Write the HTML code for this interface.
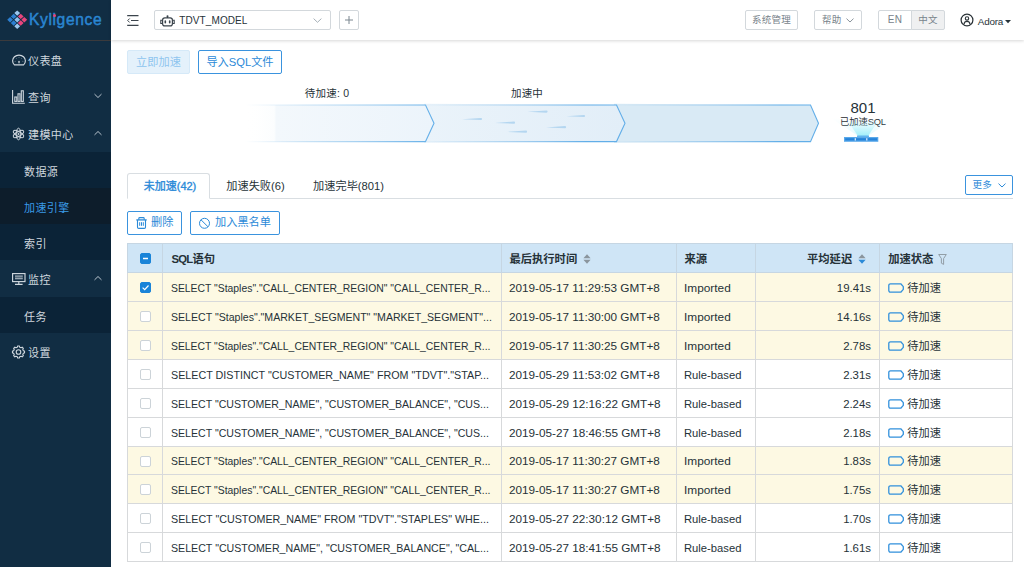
<!DOCTYPE html>
<html lang="zh-CN">
<head>
<meta charset="utf-8">
<title>Kyligence</title>
<style>
*{box-sizing:border-box;margin:0;padding:0}
html,body{width:1024px;height:567px;overflow:hidden;background:#fff}
body{font-family:"Liberation Sans","Noto Sans CJK SC",sans-serif;font-size:10px;color:#263238;position:relative}
.abs{position:absolute}
svg{display:block;overflow:visible}
/* sidebar */
#side{position:absolute;left:0;top:0;width:111px;height:567px;background:#112d43}
#logo{position:absolute;left:0;top:0;width:111px;height:41px;border-bottom:1px solid #3b3a3c}
#logo .txt{position:absolute;left:29px;top:10px;font-size:15.600px;font-weight:400;-webkit-text-stroke:.45px #2a86d2;line-height:20px;color:#2a86d2;letter-spacing:.62px}
#logo .reg{position:absolute;left:100px;top:14px;font-size:3px;color:#2b8bd8}
.mi{position:absolute;left:0;width:111px;color:#d0d8df;font-size:11px;letter-spacing:0.4px}
.mi .t{position:absolute;left:28px;top:50%;transform:translateY(-50%);white-space:nowrap;line-height:14px;margin-top:1.300px}
.mi svg.ic{position:absolute;left:12px;top:50%;transform:translateY(-50%)}
.mi svg.ch{position:absolute;left:94px;top:50%;transform:translateY(-50%);margin-top:-.5px}
.sub{background:#0b2337}
.sub .t{left:24px;margin-top:2.200px}
.sub.on{background:#0d1d2b;color:#3a9be8}
/* topbar */
#top{position:absolute;left:111px;top:0;width:913px;height:40px;background:#fff;box-shadow:0 1px 3px rgba(0,0,0,.16)}
.btn{position:absolute;border:1px solid #d3d8dc;border-radius:2px;background:#fff;color:#78838b;font-size:9.5px;white-space:nowrap;text-align:center}
.bl{border-color:#2b8ad8;color:#2b8ad8}
/* table */
#tbl{position:absolute;left:127px;top:243px;width:885px;border-collapse:collapse;table-layout:fixed;font-size:11.400px;color:#263238}
#tbl th,#tbl td{border:1px solid #d7d9db;height:29px;padding:1px 0 0 6.800px;text-align:left;white-space:nowrap;overflow:hidden;vertical-align:middle;line-height:14px}
#tbl th{padding-left:7.400px;background:#cfe5f6;font-weight:700;font-size:11.300px;color:#263238;border-color:#c6d6e3}
#tbl th .cb{top:-1px}
#tbl tr.y td{background:#fdf9e3}
#tbl tr.h28 td{height:28px}
#tbl td.q{padding-left:8.300px}
#tbl th.q{padding-left:8.400px}
#tbl td.r,#tbl th.r{text-align:right;padding:1px 8px 0 0}
#tbl td.c,#tbl th.c{text-align:center;padding:0}
#tbl td:last-child{padding-left:7.300px}
#tbl th:last-child{padding-left:8.200px}
.x{display:inline-block;transform-origin:0 50%;white-space:nowrap}
.xr{display:inline-block;transform-origin:100% 50%;white-space:nowrap}
.cb{display:inline-block;width:11px;height:11px;border:1px solid #ccd3d8;border-radius:2px;background:#fff;vertical-align:middle;position:relative;top:0;left:.2px}
.cb.on{background:#1a84d8;border-color:#1a84d8}
.cb svg{position:absolute;left:-1px;top:-1px}
.st{display:inline-block;vertical-align:middle;font-size:11.200px;transform:translateY(-.5px)}
svg.si{display:inline-block;vertical-align:middle;position:relative;top:-.5px;margin-left:3px}
svg.sti{display:inline-block;width:16px;height:10px;vertical-align:middle;margin-right:3.500px;margin-left:.5px;position:relative;top:0}
</style>
</head>
<body>
<div id="side">
  <div id="logo">
    <svg class="abs" style="left:7px;top:10px" width="21" height="19" viewBox="0 0 21 19">
      <g transform="translate(10.200 9.700) scale(1 .93) rotate(45)">
        <rect x="-7.050" y="-7.050" width="4.100" height="4.100" fill="#9cc7f0"/>
        <rect x="-2.050" y="-7.050" width="4.100" height="4.100" fill="#e8457c"/>
        <rect x="2.950" y="-7.050" width="4.100" height="4.100" fill="#e8457c"/>
        <rect x="-7.050" y="-2.050" width="4.100" height="4.100" fill="#2c7fd2"/>
        <rect x="-2.050" y="-2.050" width="4.100" height="4.100" fill="#8fbfee"/>
        <rect x="2.950" y="-2.050" width="4.100" height="4.100" fill="#e8457c"/>
        <rect x="-7.050" y="2.950" width="4.100" height="4.100" fill="#2c7fd2"/>
        <rect x="-2.050" y="2.950" width="4.100" height="4.100" fill="#2c7fd2"/>
        <rect x="2.950" y="2.950" width="4.100" height="4.100" fill="#9cc7f0"/>
      </g>
    </svg>
    <span class="txt">Kyligence</span>
    <span class="abs" style="left:52.750px;top:13.500px;width:3px;height:3px;border-radius:50%;background:#e8457c"></span>
  </div>

  <div class="mi" style="top:41px;height:37px">
    <svg class="ic" width="14" height="11" viewBox="0 0 14 11" fill="none" stroke="#d0d8df" stroke-width="1.150"><path d="M2.400 10.400h9.200c1.100-1 1.800-2.500 1.800-4.100A6.400 5.700 0 0 0 .6 6.300c0 1.600.7 3.100 1.800 4.100z"/><path d="M7 8.800 6.500 6.800h1z" fill="#d0d8df" stroke-width=".6"/><g fill="#d0d8df" stroke="none" opacity=".8"><circle cx="3.100" cy="6.700" r=".45"/><circle cx="4.300" cy="4.100" r=".45"/><circle cx="7" cy="3" r=".45"/><circle cx="9.700" cy="4.100" r=".45"/><circle cx="10.900" cy="6.700" r=".45"/></g></svg>
    <span class="t">仪表盘</span>
  </div>
  <div class="mi" style="top:78px;height:37px">
    <svg class="ic" style="margin-top:.5px" width="13" height="14" viewBox="0 0 13 14" fill="none" stroke="#d0d8df" stroke-width="1.100"><path d="M.6 0v13.300h12.200"/><rect x="2.800" y="7" width="2" height="4.400"/><rect x="6" y="3.800" width="2" height="7.600"/><rect x="9.300" y=".8" width="2" height="10.600"/></svg>
    <span class="t">查询</span>
    <svg class="ch" width="8" height="5" viewBox="0 0 8 5" fill="none" stroke="#b9c4ce" stroke-width="1"><path d="M.5.6 4 4 7.500.6"/></svg>
  </div>
  <div class="mi" style="top:115px;height:37px">
    <svg class="ic" width="13" height="13" viewBox="0 0 13 13" fill="none" stroke="#d0d8df" stroke-width="1"><ellipse cx="6.5" cy="6.5" rx="2.3" ry="5.8"/><ellipse cx="6.5" cy="6.5" rx="2.3" ry="5.8" transform="rotate(60 6.5 6.5)"/><ellipse cx="6.5" cy="6.5" rx="2.3" ry="5.8" transform="rotate(-60 6.5 6.5)"/><circle cx="6.5" cy="6.5" r="1" fill="#d0d8df" stroke="none"/></svg>
    <span class="t">建模中心</span>
    <svg class="ch" width="8" height="5" viewBox="0 0 8 5" fill="none" stroke="#b9c4ce" stroke-width="1"><path d="M.5 4.400 4 1 7.500 4.400"/></svg>
  </div>
  <div class="mi sub" style="top:152px;height:36px"><span class="t">数据源</span></div>
  <div class="mi sub on" style="top:188px;height:36px"><span class="t">加速引擎</span></div>
  <div class="mi sub" style="top:224px;height:36px"><span class="t">索引</span></div>
  <div class="mi" style="top:260px;height:37px">
    <svg class="ic" style="margin-top:.8px" width="14" height="12" viewBox="0 0 14 12" fill="none" stroke="#d0d8df" stroke-width="1.150"><rect x=".6" y=".6" width="12.400" height="8"/><path d="M3 3.100h7.800" stroke-width="1"/><path d="M3 5.400h7.800" stroke-width="1.800" opacity=".7"/><path d="M3 11.300h7.600M6.800 8.600v2.700"/></svg>
    <span class="t">监控</span>
    <svg class="ch" width="8" height="5" viewBox="0 0 8 5" fill="none" stroke="#b9c4ce" stroke-width="1"><path d="M.5 4.400 4 1 7.500 4.400"/></svg>
  </div>
  <div class="mi sub" style="top:297px;height:36px"><span class="t">任务</span></div>
  <div class="mi" style="top:333px;height:37px">
    <svg class="ic" width="13" height="13" viewBox="0 0 13 13" fill="none" stroke="#d0d8df" stroke-width="1.100" stroke-linejoin="round"><path d="M11.36 5.33 L12.54 5.64 L12.54 7.36 L11.36 7.67 L10.76 9.11 L11.38 10.16 L10.16 11.38 L9.11 10.76 L7.67 11.36 L7.36 12.54 L5.64 12.54 L5.33 11.36 L3.89 10.76 L2.84 11.38 L1.62 10.16 L2.24 9.11 L1.64 7.67 L0.46 7.36 L0.46 5.64 L1.64 5.33 L2.24 3.89 L1.62 2.84 L2.84 1.62 L3.89 2.24 L5.33 1.64 L5.64 0.46 L7.36 0.46 L7.67 1.64 L9.11 2.24 L10.16 1.62 L11.38 2.84 L10.76 3.89Z"/><circle cx="6.500" cy="6.500" r="2.300"/></svg>
    <span class="t">设置</span>
  </div>
</div>
<div id="top">
  <!-- hamburger -->
  <svg class="abs" style="left:16px;top:15px" width="12" height="11" viewBox="0 0 12 11" fill="none" stroke="#3b444c" stroke-width="1.200"><path d="M.2.700h11.300M4 5.500h7.500M.2 10.400h11.300"/><path d="M2.700 3.500.7 5.500 2.700 7.500" stroke-width="1"/></svg>
  <!-- project select -->
  <div class="abs" style="left:43px;top:10px;width:177px;height:20px;border:1px solid #d3d8dc;border-radius:2px;background:#fff">
    <svg class="abs" style="left:5px;top:3.500px" width="15" height="12" viewBox="0 0 15 12" fill="none" stroke="#3b444c" stroke-width="1.200"><rect x="2.600" y="2.900" width="9.800" height="8" rx="2.200"/><circle cx="7.500" cy="1.200" r="1" fill="#3b444c" stroke="none"/><path d="M7.500 1.500V3"/><path d="M2.600 5.300H.8v3.200h1.800M12.400 5.300h1.800v3.200h-1.800" stroke-width="1.100"/><rect x="4.500" y="5.200" width="1.600" height="3.400" rx=".8" fill="#3b444c" stroke="none"/><rect x="8.900" y="5.200" width="1.600" height="3.400" rx=".8" fill="#3b444c" stroke="none"/></svg>
    <span class="abs" style="left:24.300px;top:4px;font-size:10px;line-height:12.500px;color:#263238;letter-spacing:.1px">TDVT_MODEL</span>
    <svg class="abs" style="left:158px;top:7px" width="9" height="5" viewBox="0 0 9 5" fill="none" stroke="#a6b0b8" stroke-width="1"><path d="M.6.6 4.500 4.300 8.400.6"/></svg>
  </div>
  <div class="btn" style="left:228px;top:10px;width:20px;height:20px">
    <svg class="abs" style="left:5px;top:5px" width="8" height="8" viewBox="0 0 8 8" stroke="#7b868f" stroke-width="1"><path d="M4 0v8M0 4h8"/></svg>
  </div>
  <div class="btn" style="left:634px;top:10px;width:53px;height:20px;line-height:17px;letter-spacing:.3px">系统管理</div>
  <div class="btn" style="left:703px;top:10px;width:48px;height:20px;line-height:17px;text-align:left;padding-left:7px;letter-spacing:.3px">帮助
    <svg class="abs" style="left:31px;top:7px" width="8" height="5" viewBox="0 0 8 5" fill="none" stroke="#8a949c" stroke-width="1"><path d="M.5.6 4 4 7.5.6"/></svg>
  </div>
  <div class="btn" style="left:767px;top:10px;width:34px;height:20px;line-height:18px;border-radius:2px 0 0 2px;font-size:10px;letter-spacing:.2px">EN</div>
  <div class="btn" style="left:800px;top:10px;width:34px;height:20px;line-height:17px;border-radius:0 2px 2px 0;background:#eff0f1;letter-spacing:.3px">中文</div>
  <!-- user -->
  <svg class="abs" style="left:849.300px;top:13.300px" width="14" height="14" viewBox="0 0 14 14" fill="none" stroke="#2b3338" stroke-width="1.250"><circle cx="7" cy="7" r="5.900"/><circle cx="7" cy="5.400" r="1.700" stroke-width="1.100"/><path d="M3.900 11.300c.3-1.900 1.500-2.900 3.100-2.900s2.800 1 3.100 2.900" stroke-width="1.100"/></svg>
  <span class="abs" style="left:866.800px;top:14.500px;font-size:9.900px;line-height:13px;color:#263238;letter-spacing:-.2px">Adora</span>
  <svg class="abs" style="left:894.300px;top:20px" width="6" height="4" viewBox="0 0 6 4"><path d="M0 0h6L3 3.300z" fill="#263238"/></svg>
</div>

<!-- action buttons -->
<div class="abs" style="left:127px;top:50px;width:63px;height:24px;border:1px solid #d5e9f8;border-radius:2px;background:#e4f1fb;color:#8ec5ef;font-size:11.200px;line-height:23px;text-align:center;letter-spacing:0">立即加速</div>
<div class="abs" style="left:198px;top:50px;width:84px;height:24px;border:1px solid #3a93de;border-radius:2px;background:#fff;color:#2b8ad8;font-size:11.200px;line-height:23px;text-align:center;letter-spacing:0">导入SQL文件</div>

<!-- flow -->
<div class="abs" style="left:277px;top:86px;width:100px;text-align:center;font-size:10.5px;line-height:14px;color:#263238;letter-spacing:.2px">待加速: 0</div>
<div class="abs" style="left:477px;top:86px;width:100px;text-align:center;font-size:10.5px;line-height:14px;color:#263238;letter-spacing:.2px">加速中</div>
<svg class="abs" style="left:230px;top:100px" width="600" height="46" viewBox="230 100 600 46">
  <defs>
    <linearGradient id="g1" gradientUnits="userSpaceOnUse" x1="245" x2="434" y1="0" y2="0"><stop offset="0" stop-color="#ffffff" stop-opacity="0"/><stop offset=".155" stop-color="#fbfdfe"/><stop offset=".165" stop-color="#f3f8fc"/><stop offset="1" stop-color="#ecf4fb"/></linearGradient>
    <linearGradient id="g1s" gradientUnits="userSpaceOnUse" x1="245" x2="434" y1="0" y2="0"><stop offset="0" stop-color="#9ccbee" stop-opacity="0"/><stop offset=".35" stop-color="#9ccbee" stop-opacity=".55"/><stop offset="1" stop-color="#62aee8"/></linearGradient>
    <linearGradient id="g2" gradientUnits="userSpaceOnUse" x1="424" x2="625" y1="0" y2="0"><stop offset="0" stop-color="#eaf3fa"/><stop offset="1" stop-color="#e2eef8"/></linearGradient>
    <linearGradient id="g2s" gradientUnits="userSpaceOnUse" x1="430" x2="625" y1="0" y2="0"><stop offset="0" stop-color="#8cc3ec" stop-opacity=".1"/><stop offset=".5" stop-color="#7ebbea" stop-opacity=".7"/><stop offset=".8" stop-color="#62aee8"/></linearGradient>
    <linearGradient id="g3s" gradientUnits="userSpaceOnUse" x1="622" x2="819" y1="0" y2="0"><stop offset="0" stop-color="#8cc3ec" stop-opacity=".1"/><stop offset=".5" stop-color="#7ebbea" stop-opacity=".75"/><stop offset=".8" stop-color="#62aee8"/></linearGradient>
  </defs>
  <!-- seg 3 -->
  <path d="M614 103.800L810.500 105 818.500 123.300 810.500 141.600 614 142.800Z" fill="#d9eaf5"/>
  <path d="M617 105H810.500L818.500 123.300 810.500 141.600H617" fill="none" stroke="url(#g3s)" stroke-width="1.100"/>
  <!-- seg 2 -->
  <path d="M424 103.800L616.500 105 625 123.300 616.500 141.600 424 142.800Z" fill="url(#g2)"/>
  <path d="M426 105H616.500L625 123.300 616.500 141.600H426" fill="none" stroke="url(#g2s)" stroke-width="1.100"/>
  <!-- seg 1 -->
  <path d="M245 105H425.500L434 123.300 425.500 141.600H245Z" fill="url(#g1)"/>
  <path d="M245 105H425.500L434 123.300 425.500 141.600H245" fill="none" stroke="url(#g1s)" stroke-width="1.100"/>
  <!-- streaks -->
  <g fill="#b4d6f0">
    <path d="M462 119.200 481 117.900a1 1 0 0 1 0 2.200z"/>
    <path d="M495 122.900 514 121.600a1 1 0 0 1 0 2.200z"/>
    <path d="M527.500 111.800 546.500 110.500a1 1 0 0 1 0 2.200z"/>
    <path d="M507 131.900 526 130.600a1 1 0 0 1 0 2.200z"/>
    <path d="M546 127.400 565 126.100a1 1 0 0 1 0 2.200z"/>
    <path d="M566.500 116.200 584 114.900a1 1 0 0 1 0 2.200z"/>
  </g>
</svg>
<div class="abs" style="left:823px;top:99px;width:80px;text-align:center;font-size:15px;line-height:18px;color:#263238">801</div>
<div class="abs" style="left:823px;top:116px;width:80px;text-align:center;font-size:9.300px;line-height:12px;color:#1f2a30;letter-spacing:-.1px">已加速SQL</div>
<svg class="abs" style="left:835px;top:118px" width="56" height="26" viewBox="0 0 56 26">
  <defs><linearGradient id="bm" x1="0" x2="0" y1="0" y2="1"><stop offset="0" stop-color="#b8f4fc" stop-opacity="0"/><stop offset="1" stop-color="#9deefa" stop-opacity=".95"/></linearGradient></defs>
  <path d="M-4 0H60L33 18H23Z" fill="url(#bm)" opacity=".3"/>
  <path d="M12 2H44L33 18H23Z" fill="url(#bm)"/>
  <rect x="22" y="17.500" width="12" height="1.500" fill="#62b4ee"/>
  <rect x="9" y="19" width="34.300" height="4.800" fill="#5aa9ea"/>
  <rect x="10.200" y="20.200" width="32" height="2.300" fill="#2583da"/>
  <rect x="19.700" y="20.200" width="1.200" height="2.300" fill="#e6f3fc"/><rect x="31.200" y="20.200" width="1.200" height="2.300" fill="#e6f3fc"/>
</svg>
<!-- tabs -->
<div class="abs" style="left:127px;top:198px;width:886px;height:1px;background:#d9dee2"></div>
<div class="abs" style="left:127px;top:173px;width:83px;height:26px;border:1px solid #d9dee2;border-bottom:1px solid #fff;border-radius:3px 3px 0 0;background:#fff;color:#2b8ad8;font-size:11px;-webkit-text-stroke:.35px #2b8ad8;line-height:25.500px;text-align:center;letter-spacing:0;padding-left:3px">未加速(42)</div>
<div class="abs" style="left:212px;top:173px;width:87px;height:26px;color:#263238;font-size:11.200px;line-height:27px;text-align:center;letter-spacing:0">加速失败(6)</div>
<div class="abs" style="left:299px;top:173px;width:99px;height:26px;color:#263238;font-size:11.200px;line-height:27px;text-align:center;letter-spacing:0">加速完毕(801)</div>
<div class="abs bl" style="left:965px;top:175px;width:48px;height:19.500px;border:1px solid #3a93de;border-radius:2px;color:#2b8ad8;font-size:9.600px;line-height:18px;padding-left:6.500px;letter-spacing:.2px">更多
  <svg class="abs" style="left:31.500px;top:6.500px" width="8" height="5" viewBox="0 0 8 5" fill="none" stroke="#2b8ad8" stroke-width="1"><path d="M.5.6 4 4 7.5.6"/></svg>
</div>
<!-- row buttons -->
<div class="abs" style="left:127px;top:211px;width:55px;height:24px;border:1px solid #3a93de;border-radius:2px;color:#2b8ad8;font-size:11.200px;line-height:21px;letter-spacing:0">
  <svg class="abs" style="left:7.600px;top:5px" width="11" height="12" viewBox="0 0 11 12" fill="none" stroke="#2b8ad8" stroke-width="1.100"><path d="M.3 2.900h10.400" stroke-width="1.300"/><path d="M2.800 2.700V1.500c0-.5.400-.9.900-.9h3.600c.5 0 .9.400.9.900v1.200M1.500 3v7.200c0 .7.500 1.200 1.200 1.200h5.600c.7 0 1.200-.5 1.200-1.200V3"/><path d="M3.700 5.200v3.600M5.500 5.200v3.600M7.300 5.200v3.600" stroke-width="1"/></svg>
  <span class="abs" style="left:23px;top:0">删除</span>
</div>
<div class="abs" style="left:190px;top:211px;width:90px;height:24px;border:1px solid #3a93de;border-radius:2px;color:#2b8ad8;font-size:11.200px;line-height:21px;letter-spacing:0">
  <svg class="abs" style="left:8px;top:6px" width="11" height="11" viewBox="0 0 11 11" fill="none" stroke="#2b8ad8" stroke-width="1"><circle cx="5.500" cy="5.300" r="5"/><path d="M2 1.800l7 7"/></svg>
  <span class="abs" style="left:24px;top:0">加入黑名单</span>
</div>
<table id="tbl"><colgroup><col style="width:35px"><col style="width:339px"><col style="width:175px"><col style="width:79px"><col style="width:124px"><col style="width:133px"></colgroup>
<tr><th class="c"><span class="cb on"><svg width="11" height="11" viewBox="0 0 11 11"><path d="M3 5.500h5" stroke="#fff" stroke-width="1.500"/></svg></span></th><th class="q"><span style="letter-spacing:-.75px">SQL</span>语句</th><th>最后执行时间 <svg class="si"  width="8" height="10" viewBox="0 0 8 10"><path d="M4 .3 7.600 4.200H.4z" fill="#8b959d"/><path d="M4 9.700 7.600 5.800H.4z" fill="#8b959d"/></svg></th><th>来源</th><th class="r" style="padding-right:12.700px">平均延迟 <svg class="si"  width="8" height="10" viewBox="0 0 8 10"><path d="M4 .3 7.600 4.200H.4z" fill="#8b959d"/><path d="M4 9.700 7.600 5.800H.4z" fill="#2b8ad8"/></svg></th><th>加速状态 <svg class="si" style="margin-left:1.500px" width="9" height="11" viewBox="0 0 9 11" fill="none" stroke="#8b959d" stroke-width=".9"><path d="M.7.500h7.600L5.600 4.600v5.800L3.400 9.200V4.600z"/></svg></th></tr>
<tr class="y"><td class="c"><span class="cb on"><svg width="11" height="11" viewBox="0 0 11 11" fill="none"><path d="M2.600 5.600 4.700 7.600 8.500 3.500" stroke="#fff" stroke-width="1.200"/></svg></span></td><td class="q"><span class="x"style="transform:translateY(-.5px) scaleX(0.9114)">SELECT &quot;Staples&quot;.&quot;CALL_CENTER_REGION&quot; &quot;CALL_CENTER_R...</span></td><td><span class="x" style="transform:translateY(-.5px) scaleX(1.03)">2019-05-17 11:29:53 GMT+8</span></td><td><span class="x" style="transform:translateY(-.5px) scaleX(1.040)">Imported</span></td><td class="r"><span class="xr" style="transform:translateY(-.5px)">19.41s</span></td><td><svg class="sti" viewBox="0 0 16 10" fill="none" stroke="#3190dc" stroke-width="1.300" stroke-linejoin="round"><path d="M2.400.8h10.400l2.500 2.800v2.800l-2.500 2.800H2.400a1.600 1.600 0 0 1-1.600-1.600V2.400A1.600 1.600 0 0 1 2.400.8z"/></svg><span class="st">待加速</span></td></tr>
<tr class="y"><td class="c"><span class="cb"></span></td><td class="q"><span class="x"style="transform:translateY(-.5px) scaleX(0.9285)">SELECT &quot;Staples&quot;.&quot;MARKET_SEGMENT&quot; &quot;MARKET_SEGMENT&quot;...</span></td><td><span class="x" style="transform:translateY(-.5px) scaleX(1.03)">2019-05-17 11:30:00 GMT+8</span></td><td><span class="x" style="transform:translateY(-.5px) scaleX(1.040)">Imported</span></td><td class="r"><span class="xr" style="transform:translateY(-.5px)">14.16s</span></td><td><svg class="sti" viewBox="0 0 16 10" fill="none" stroke="#3190dc" stroke-width="1.300" stroke-linejoin="round"><path d="M2.400.8h10.400l2.500 2.800v2.800l-2.500 2.800H2.400a1.600 1.600 0 0 1-1.600-1.600V2.400A1.600 1.600 0 0 1 2.400.8z"/></svg><span class="st">待加速</span></td></tr>
<tr class="y"><td class="c"><span class="cb"></span></td><td class="q"><span class="x"style="transform:translateY(-.5px) scaleX(0.9114)">SELECT &quot;Staples&quot;.&quot;CALL_CENTER_REGION&quot; &quot;CALL_CENTER_R...</span></td><td><span class="x" style="transform:translateY(-.5px) scaleX(1.03)">2019-05-17 11:30:25 GMT+8</span></td><td><span class="x" style="transform:translateY(-.5px) scaleX(1.040)">Imported</span></td><td class="r"><span class="xr" style="transform:translateY(-.5px)">2.78s</span></td><td><svg class="sti" viewBox="0 0 16 10" fill="none" stroke="#3190dc" stroke-width="1.300" stroke-linejoin="round"><path d="M2.400.8h10.400l2.500 2.800v2.800l-2.500 2.800H2.400a1.600 1.600 0 0 1-1.600-1.600V2.400A1.600 1.600 0 0 1 2.400.8z"/></svg><span class="st">待加速</span></td></tr>
<tr><td class="c"><span class="cb"></span></td><td class="q"><span class="x"style="transform:translateY(-.5px) scaleX(0.9436)">SELECT DISTINCT &quot;CUSTOMER_NAME&quot; FROM &quot;TDVT&quot;.&quot;STAP...</span></td><td><span class="x" style="transform:translateY(-.5px) scaleX(1.03)">2019-05-29 11:53:02 GMT+8</span></td><td><span class="x" style="transform:translateY(-.5px) scaleX(0.985)">Rule-based</span></td><td class="r"><span class="xr" style="transform:translateY(-.5px)">2.31s</span></td><td><svg class="sti" viewBox="0 0 16 10" fill="none" stroke="#3190dc" stroke-width="1.300" stroke-linejoin="round"><path d="M2.400.8h10.400l2.500 2.800v2.800l-2.500 2.800H2.400a1.600 1.600 0 0 1-1.600-1.600V2.400A1.600 1.600 0 0 1 2.400.8z"/></svg><span class="st">待加速</span></td></tr>
<tr><td class="c"><span class="cb"></span></td><td class="q"><span class="x"style="transform:translateY(-.5px) scaleX(0.9284)">SELECT &quot;CUSTOMER_NAME&quot;, &quot;CUSTOMER_BALANCE&quot;, &quot;CUS...</span></td><td><span class="x" style="transform:translateY(-.5px) scaleX(1.03)">2019-05-29 12:16:22 GMT+8</span></td><td><span class="x" style="transform:translateY(-.5px) scaleX(0.985)">Rule-based</span></td><td class="r"><span class="xr" style="transform:translateY(-.5px)">2.24s</span></td><td><svg class="sti" viewBox="0 0 16 10" fill="none" stroke="#3190dc" stroke-width="1.300" stroke-linejoin="round"><path d="M2.400.8h10.400l2.500 2.800v2.800l-2.500 2.800H2.400a1.600 1.600 0 0 1-1.600-1.600V2.400A1.600 1.600 0 0 1 2.400.8z"/></svg><span class="st">待加速</span></td></tr>
<tr><td class="c"><span class="cb"></span></td><td class="q"><span class="x"style="transform:translateY(-.5px) scaleX(0.9284)">SELECT &quot;CUSTOMER_NAME&quot;, &quot;CUSTOMER_BALANCE&quot;, &quot;CUS...</span></td><td><span class="x" style="transform:translateY(-.5px) scaleX(1.03)">2019-05-27 18:46:55 GMT+8</span></td><td><span class="x" style="transform:translateY(-.5px) scaleX(0.985)">Rule-based</span></td><td class="r"><span class="xr" style="transform:translateY(-.5px)">2.18s</span></td><td><svg class="sti" viewBox="0 0 16 10" fill="none" stroke="#3190dc" stroke-width="1.300" stroke-linejoin="round"><path d="M2.400.8h10.400l2.500 2.800v2.800l-2.500 2.800H2.400a1.600 1.600 0 0 1-1.600-1.600V2.400A1.600 1.600 0 0 1 2.400.8z"/></svg><span class="st">待加速</span></td></tr>
<tr class="y h28"><td class="c"><span class="cb"></span></td><td class="q"><span class="x"style="transform:translateY(-.5px) scaleX(0.9114)">SELECT &quot;Staples&quot;.&quot;CALL_CENTER_REGION&quot; &quot;CALL_CENTER_R...</span></td><td><span class="x" style="transform:translateY(-.5px) scaleX(1.03)">2019-05-17 11:30:27 GMT+8</span></td><td><span class="x" style="transform:translateY(-.5px) scaleX(1.040)">Imported</span></td><td class="r"><span class="xr" style="transform:translateY(-.5px)">1.83s</span></td><td><svg class="sti" viewBox="0 0 16 10" fill="none" stroke="#3190dc" stroke-width="1.300" stroke-linejoin="round"><path d="M2.400.8h10.400l2.500 2.800v2.800l-2.500 2.800H2.400a1.600 1.600 0 0 1-1.600-1.600V2.400A1.600 1.600 0 0 1 2.400.8z"/></svg><span class="st">待加速</span></td></tr>
<tr class="y"><td class="c"><span class="cb"></span></td><td class="q"><span class="x"style="transform:translateY(-.5px) scaleX(0.9114)">SELECT &quot;Staples&quot;.&quot;CALL_CENTER_REGION&quot; &quot;CALL_CENTER_R...</span></td><td><span class="x" style="transform:translateY(-.5px) scaleX(1.03)">2019-05-17 11:30:27 GMT+8</span></td><td><span class="x" style="transform:translateY(-.5px) scaleX(1.040)">Imported</span></td><td class="r"><span class="xr" style="transform:translateY(-.5px)">1.75s</span></td><td><svg class="sti" viewBox="0 0 16 10" fill="none" stroke="#3190dc" stroke-width="1.300" stroke-linejoin="round"><path d="M2.400.8h10.400l2.500 2.800v2.800l-2.500 2.800H2.400a1.600 1.600 0 0 1-1.600-1.600V2.400A1.600 1.600 0 0 1 2.400.8z"/></svg><span class="st">待加速</span></td></tr>
<tr><td class="c"><span class="cb"></span></td><td class="q"><span class="x"style="transform:translateY(-.5px) scaleX(0.9400)">SELECT &quot;CUSTOMER_NAME&quot; FROM &quot;TDVT&quot;.&quot;STAPLES&quot; WHE...</span></td><td><span class="x" style="transform:translateY(-.5px) scaleX(1.03)">2019-05-27 22:30:12 GMT+8</span></td><td><span class="x" style="transform:translateY(-.5px) scaleX(0.985)">Rule-based</span></td><td class="r"><span class="xr" style="transform:translateY(-.5px)">1.70s</span></td><td><svg class="sti" viewBox="0 0 16 10" fill="none" stroke="#3190dc" stroke-width="1.300" stroke-linejoin="round"><path d="M2.400.8h10.400l2.500 2.800v2.800l-2.500 2.800H2.400a1.600 1.600 0 0 1-1.600-1.600V2.400A1.600 1.600 0 0 1 2.400.8z"/></svg><span class="st">待加速</span></td></tr>
<tr><td class="c"><span class="cb"></span></td><td class="q"><span class="x"style="transform:translateY(-.5px) scaleX(0.9336)">SELECT &quot;CUSTOMER_NAME&quot;, &quot;CUSTOMER_BALANCE&quot;, &quot;CAL...</span></td><td><span class="x" style="transform:translateY(-.5px) scaleX(1.03)">2019-05-27 18:41:55 GMT+8</span></td><td><span class="x" style="transform:translateY(-.5px) scaleX(0.985)">Rule-based</span></td><td class="r"><span class="xr" style="transform:translateY(-.5px)">1.61s</span></td><td><svg class="sti" viewBox="0 0 16 10" fill="none" stroke="#3190dc" stroke-width="1.300" stroke-linejoin="round"><path d="M2.400.8h10.400l2.500 2.800v2.800l-2.500 2.800H2.400a1.600 1.600 0 0 1-1.600-1.600V2.400A1.600 1.600 0 0 1 2.400.8z"/></svg><span class="st">待加速</span></td></tr>
</table>
</body>
</html>
